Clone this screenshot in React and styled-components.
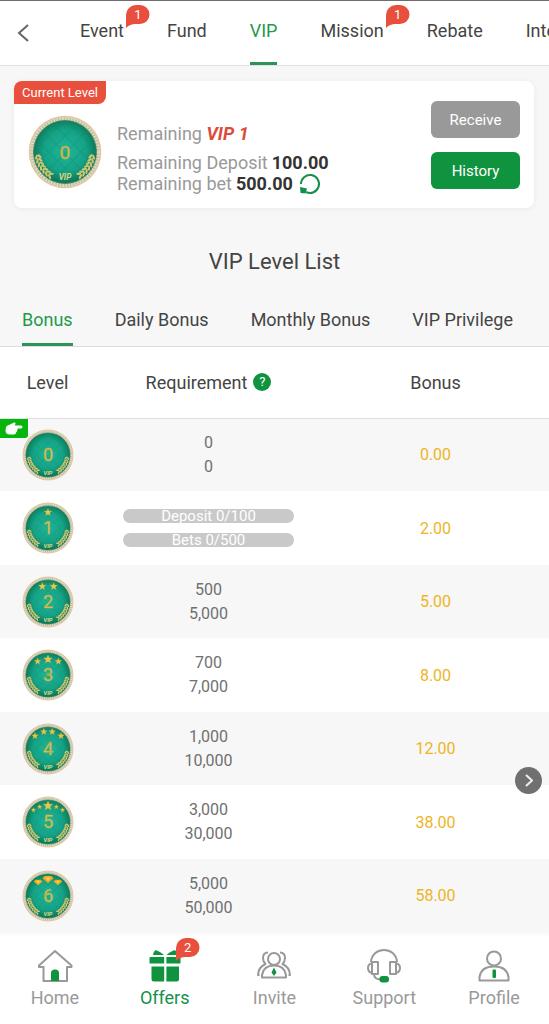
import React from 'react'
import styled, { createGlobalStyle } from 'styled-components'

const topTabs = [
    { name: 'Event', count: 1 },
    { name: 'Fund' },
    { name: 'VIP', active: true },
    { name: 'Mission', count: 1 },
    { name: 'Rebate' },
    { name: 'Interest' },
]

const levelTabs = ['Bonus', 'Daily Bonus', 'Monthly Bonus', 'VIP Privilege']

const levels = [
    { level: 0, deposit: '0', bets: '0', bonus: '0.00', current: true },
    { level: 1, deposit: '0/100', bets: '0/500', bonus: '2.00', progress: true },
    { level: 2, deposit: '500', bets: '5,000', bonus: '5.00' },
    { level: 3, deposit: '700', bets: '7,000', bonus: '8.00' },
    { level: 4, deposit: '1,000', bets: '10,000', bonus: '12.00' },
    { level: 5, deposit: '3,000', bets: '30,000', bonus: '38.00' },
    { level: 6, deposit: '5,000', bets: '50,000', bonus: '58.00' },
]

// [x, y, radius] of the stars above the number
const stars = {
    1: [[50, 20, 8]],
    2: [[39, 20, 8], [61, 20, 8]],
    3: [[30, 24, 7], [50, 20, 9], [70, 24, 7]],
    4: [[25, 25, 7], [42, 17, 7], [58, 17, 7], [75, 25, 7]],
    5: [[22, 27, 5], [34, 21, 5], [50, 19, 10], [66, 21, 5], [78, 27, 5]],
}

const gems = [[31, 23, 7], [50, 17, 9], [69, 23, 7]]

const leaves = [0, 1, 2, 3, 4, 5, 6]

const starPoints = (x, y, r) =>
    Array.from({ length: 10 }, (_, i) => {
        const radius = i % 2 ? r * 0.45 : r
        const angle = (Math.PI / 5) * i - Math.PI / 2
        return `${(x + radius * Math.cos(angle)).toFixed(1)},${(y + radius * Math.sin(angle)).toFixed(1)}`
    }).join(' ')

const Laurel = () => (
    <g>
        {leaves.map(i => (
            <g key={i} transform={`rotate(${168 - i * 8} 50 50) translate(87 50) rotate(90)`} fill="#d3c672">
                <ellipse cx="0" cy="-2.6" rx="3.6" ry="1.5" transform="rotate(32)" />
                <ellipse cx="0" cy="2.6" rx="3.6" ry="1.5" transform="rotate(-32)" />
            </g>
        ))}
    </g>
)

const Medal = ({ level, size }) => (
    <MedalImage viewBox="0 0 100 100" $size={size} role="img" aria-label={`VIP level ${level}`}>
        <defs>
            <radialGradient id={`enamel${size}${level}`} cx="50%" cy="48%" r="52%">
                <stop offset="0" stopColor="#1fb59a" />
                <stop offset="0.65" stopColor="#15a286" />
                <stop offset="1" stopColor="#0b7552" />
            </radialGradient>
        </defs>
        <circle cx="50" cy="50" r="49" fill="#dcc7a2" />
        <circle cx="50" cy="50" r="46" fill="#b5bca3" />
        <circle cx="50" cy="50" r="45" fill="none" stroke="#e2dcc6" strokeWidth="4" strokeDasharray="2 2" />
        <circle cx="50" cy="50" r="42.5" fill={`url(#enamel${size}${level})`} stroke="#3f8059" strokeWidth="1" />
        <g stroke="#0f8e70" strokeWidth="1.4" opacity="0.35" fill="none">
            <path d="M14 36 L64 86 M20 22 L78 80 M36 14 L86 64 M54 10 L90 46" />
            <path d="M86 36 L36 86 M80 22 L22 80 M64 14 L14 64 M46 10 L10 46" />
        </g>
        <Laurel />
        <g transform="matrix(-1 0 0 1 100 0)"><Laurel /></g>
        <MedalName x="50" y="88">VIP</MedalName>
        {(stars[level] || []).map(([x, y, r]) => (
            <polygon key={x} points={starPoints(x, y, r)} fill="#e2c750" stroke="#9b9a3e" strokeWidth="0.6" />
        ))}
        {level === 6 && gems.map(([x, y, r]) => (
            <g key={x}>
                <path d={`M${x - r * 0.7} ${y - r * 0.6} h${r * 1.4} l${r * 0.5} ${r * 0.5} l${-r * 1.2} ${r} l${-r * 1.2} ${-r} z`} fill="#f3a81f" />
                <path d={`M${x - r * 0.5} ${y - r * 0.3} h${r} l${-r * 0.5} ${r * 0.7} z`} fill="#ffd75e" />
            </g>
        ))}
        <MedalNumber x="50" y={size > 60 ? 59 : 61} $size={size}>{level}</MedalNumber>
    </MedalImage>
)

const CountBubble = ({ count, place }) => (
    <Bubble $place={place}>
        <BubbleShape viewBox="0 0 24 24">
            <path d="M10 0 H14 A9.5 9.5 0 0 1 14 19 H9 C6 19 3 20 0 23 V10 A10 10 0 0 1 10 0 Z" fill="#e94f3d" />
        </BubbleShape>
        <BubbleCount>{count}</BubbleCount>
    </Bubble>
)

const HomeIcon = () => (
    <NavIcon viewBox="0 0 36 36">
        <path d="M18 3 L2 17.500 V19 H6.500 V33 H30 V19 H34.500 V17.500 Z" />
        <path className="fill" d="M14 33 V25 Q14 21.500 18 21.500 Q22 21.500 22 25 V33 Z" />
    </NavIcon>
)

const OffersIcon = () => (
    <NavIcon viewBox="0 0 36 36">
        <g className="fill">
            <path d="M3.500 9 H17.200 V15.500 H2.500 V10 Q2.500 9 3.500 9 Z" />
            <path d="M19.400 9 H32.500 Q33.500 9 33.500 10 V15.500 H19.400 Z" />
            <path d="M4.500 18.500 H17.200 V33.500 H7 Q4.500 33.500 4.500 31 Z" />
            <path d="M19.400 18.500 H32 V31 Q32 33.500 29.500 33.500 H19.400 Z" />
            <path d="M6 7 Q7 1.500 10 2.500 Q14 4 17 7 Z" />
            <path d="M19.500 7 Q22 4 26.500 2.500 Q29.500 1.500 30.500 7 Z" />
        </g>
    </NavIcon>
)

const InviteIcon = () => (
    <NavIcon viewBox="0 0 36 36">
        <circle cx="18" cy="11" r="6" />
        <path d="M6 29.500 V27 Q7.500 17.500 18 17.500 Q28.500 17.500 30 27 V29.500 Z" />
        <path d="M12 4.500 Q7 4.500 7 10 Q7 13.500 9.500 16 Q2.500 19 2 27 H3.500" />
        <path d="M24 4.500 Q29 4.500 29 10 Q29 13.500 26.500 16 Q33.500 19 34 27 H32.500" />
        <path className="fill" d="M18 19.500 L20.500 24.500 L18 28 L15.500 24.500 Z" />
    </NavIcon>
)

const SupportIcon = () => (
    <NavIcon viewBox="0 0 36 36">
        <path d="M5 14 C6 -2 30 -2 31 14" />
        <rect x="6" y="14" width="6" height="12" />
        <rect x="24" y="14" width="6" height="12" />
        <path d="M6 15.500 Q2 16 2 20 Q2 24 6 25 M30 15.500 Q34 16 34 20 Q34 24 30 25" />
        <path d="M8 26 Q8 31 14 31.500" />
        <rect className="fill" x="13.500" y="28" width="9.500" height="6.500" rx="3" />
    </NavIcon>
)

const ProfileIcon = () => (
    <NavIcon viewBox="0 0 36 36">
        <circle cx="18" cy="10.500" r="7" />
        <path d="M3.500 32.500 V29 Q5 18.500 18 18.500 Q31 18.500 32.500 29 V32.500 Z" />
        <rect className="fill" x="16.500" y="21.500" width="3.500" height="8.500" rx="1" />
    </NavIcon>
)

const navItems = [
    { name: 'Home', Icon: HomeIcon },
    { name: 'Offers', Icon: OffersIcon, active: true, count: 2 },
    { name: 'Invite', Icon: InviteIcon },
    { name: 'Support', Icon: SupportIcon },
    { name: 'Profile', Icon: ProfileIcon },
]

const App = () => {
    return (
        <Page>
            <GlobalStyle />
            <Header>
                <BackButton aria-label="Back">
                    <svg width="12" height="18" viewBox="0 0 12 18" fill="none" stroke="currentColor" strokeWidth="2">
                        <path d="M11 1 L2 9 L11 17" />
                    </svg>
                </BackButton>
                <TopTabs>
                    {topTabs.map(tab => (
                        <TabLink key={tab.name} href="#" $active={tab.active}>
                            {tab.name}
                            {tab.count && <CountBubble count={tab.count} place="tab" />}
                        </TabLink>
                    ))}
                </TopTabs>
            </Header>

            <LevelCard>
                <CurrentTag>Current Level</CurrentTag>
                <CardBody>
                    <Medal level={0} size={74} />
                    <Remaining>
                        <NextLevel>Remaining <em>VIP 1</em></NextLevel>
                        <Amount>Remaining Deposit <b>100.00</b></Amount>
                        <Amount>
                            Remaining bet <b>500.00</b>
                            <RefreshButton aria-label="Refresh">
                                <svg width="22" height="22" viewBox="0 0 22 22">
                                    <path d="M2 11 A9 9 0 1 1 7 19" fill="none" stroke="currentColor" strokeWidth="2" />
                                    <path d="M1 14 L8 15.500 L6.500 20.500 L1.500 20 Z" fill="currentColor" />
                                </svg>
                            </RefreshButton>
                        </Amount>
                    </Remaining>
                    <CardActions>
                        <ActionButton $color="#999999">Receive</ActionButton>
                        <ActionButton $color="#0f933e">History</ActionButton>
                    </CardActions>
                </CardBody>
            </LevelCard>

            <Title>VIP Level List</Title>
            <LevelTabs>
                {levelTabs.map((name, i) => (
                    <TabLink key={name} href="#" $active={i === 0}>{name}</TabLink>
                ))}
            </LevelTabs>

            <LevelTable>
                <thead>
                    <tr>
                        <HeadCell $width="95px">Level</HeadCell>
                        <HeadCell>
                            <HeadLabel>Requirement <HelpButton aria-label="Help">?</HelpButton></HeadLabel>
                        </HeadCell>
                        <HeadCell>Bonus</HeadCell>
                    </tr>
                </thead>
                <tbody>
                    {levels.map(row => (
                        <LevelRow key={row.level}>
                            <MedalCell>
                                {row.current && (
                                    <CurrentMark>
                                        <svg width="18" height="13" viewBox="0 0 18 13" fill="currentColor">
                                            <path d="M1 5 Q2 3 5 2.500 L9 0.500 Q11 0 10.500 2 L9.500 3.500 H16 Q17.500 3.700 17.500 5 Q17.500 6.300 16 6.500 H12.500 Q13 8 12 8.500 Q12.300 10 11 10.500 Q11 12.500 9 12.500 H5 Q1 12.500 0.500 9 Z" />
                                        </svg>
                                    </CurrentMark>
                                )}
                                <Medal level={row.level} size={52} />
                            </MedalCell>
                            <td>
                                {row.progress ? (
                                    <Bars>
                                        <Bar>Deposit {row.deposit}</Bar>
                                        <Bar>Bets {row.bets}</Bar>
                                    </Bars>
                                ) : (
                                    <>
                                        <Need>{row.deposit}</Need>
                                        <Need>{row.bets}</Need>
                                    </>
                                )}
                            </td>
                            <BonusCell>{row.bonus}</BonusCell>
                        </LevelRow>
                    ))}
                </tbody>
            </LevelTable>

            <FloatingButton aria-label="Open side menu">
                <svg width="8" height="13" viewBox="0 0 8 13" fill="none" stroke="currentColor" strokeWidth="2">
                    <path d="M1 1 L7 6.500 L1 12" />
                </svg>
            </FloatingButton>

            <BottomNav>
                {navItems.map(({ name, Icon, active, count }) => (
                    <NavLink key={name} href="#" $active={active}>
                        <Icon />
                        {name}
                        {count && <CountBubble count={count} place="nav" />}
                    </NavLink>
                ))}
            </BottomNav>
        </Page>
    )
}

export default App

const GlobalStyle = createGlobalStyle`
    *{
        box-sizing: border-box;
    }
    body{
        margin: 0;
        background: #f7f7f7;
        color: #444444;
        font-family: Roboto, "Liberation Sans", sans-serif;
        font-size: 18px;
    }
    button{
        padding: 0;
        border: 0;
        font-family: inherit;
        cursor: pointer;
    }
    a{
        color: inherit;
        text-decoration: none;
    }
`

const Page = styled.div`
    display: flex;
    flex-direction: column;
    min-height: 100vh;
`

const Header = styled.header`
    display: flex;
    align-items: stretch;
    height: 66px;
    overflow: hidden;
    background: #ffffff;
    border-top: 1px solid #706c70;
    border-bottom: 1px solid #e0e0e0;
`

const BackButton = styled.button`
    display: flex;
    flex: none;
    align-items: center;
    width: 80px;
    padding-left: 17px;
    background: none;
    color: #666666;
`

const TopTabs = styled.nav`
    display: flex;
    gap: 43px;
`

const TabLink = styled.a`
    position: relative;
    display: flex;
    align-items: center;
    padding-bottom: 2px;
    white-space: nowrap;
    border-bottom: 3px solid ${({ $active }) => ($active ? '#2c9458' : 'transparent')};
    color: ${({ $active }) => ($active ? '#1f9a4b' : 'inherit')};
`

const Bubble = styled.span`
    position: absolute;
    width: 24px;
    height: 24px;
    ${({ $place }) => ($place === 'tab' ? 'top: 4px; left: calc(100% + 2px);' : 'top: 2px; left: calc(50% + 11px);')}
`

const BubbleShape = styled.svg`
    display: block;
    width: 100%;
    height: 100%;
`

const BubbleCount = styled.span`
    position: absolute;
    top: 0;
    left: 0;
    width: 100%;
    color: #ffffff;
    font-size: 13px;
    line-height: 19px;
    text-align: center;
`

const LevelCard = styled.section`
    margin: 15px 15px 0 14px;
    padding-bottom: 14px;
    background: #ffffff;
    border-radius: 8px;
    box-shadow: 0 1px 6px rgba(0, 0, 0, 0.06);
`

const CurrentTag = styled.div`
    width: fit-content;
    padding: 0 8px;
    background: #e94f3d;
    border-radius: 8px 0;
    color: #ffffff;
    font-size: 13px;
    line-height: 23px;
`

const CardBody = styled.div`
    display: flex;
    align-items: flex-start;
    padding: 0 14px;
`

const MedalImage = styled.svg`
    display: block;
    flex: none;
    width: ${({ $size }) => $size}px;
    height: ${({ $size }) => $size}px;
    ${({ $size }) => ($size > 60 ? 'margin-top: 11px;' : 'margin: 0 auto;')}
`

const MedalNumber = styled.text`
    fill: #dcc95a;
    stroke: #a8a945;
    stroke-width: 1px;
    font-size: ${({ $size }) => ($size > 60 ? 26 : 35)}px;
    text-anchor: middle;
`

const MedalName = styled.text`
    fill: #dcd68a;
    font-size: 11px;
    font-style: italic;
    font-weight: 700;
    text-anchor: middle;
`

const Remaining = styled.div`
    flex: 1;
    margin: 19px 0 0 15px;
    color: #999999;
`

const NextLevel = styled.div`
    margin-bottom: 7px;
    line-height: 22px;
    em{
        color: #dc4a3c;
        font-weight: 700;
    }
`

const Amount = styled.div`
    display: flex;
    align-items: center;
    height: 21px;
    white-space: nowrap;
    b{
        margin-left: 4px;
        color: #333333;
    }
`

const RefreshButton = styled.button`
    display: flex;
    margin-left: 6px;
    background: none;
    color: #15904a;
`

const CardActions = styled.div`
    display: flex;
    flex-direction: column;
    gap: 14px;
    margin-top: -3px;
`

const ActionButton = styled.button`
    width: 89px;
    height: 37px;
    background: ${({ $color }) => $color};
    border-radius: 6px;
    color: #ffffff;
    font-size: 15px;
`

const Title = styled.h2`
    margin: 41px 0 0;
    font-size: 22px;
    font-weight: 400;
    line-height: 26px;
    text-align: center;
`

const LevelTabs = styled.nav`
    display: flex;
    gap: 42px;
    height: 54px;
    margin-top: 18px;
    padding: 4px 22px 0;
    border-bottom: 1px solid #dddddd;
`

const LevelTable = styled.table`
    width: 100%;
    table-layout: fixed;
    border-collapse: collapse;
    background: #ffffff;
    text-align: center;
    td{
        padding: 0;
    }
`

const HeadCell = styled.th`
    width: ${({ $width }) => $width || 'auto'};
    height: 71px;
    padding: 0;
    border-bottom: 1px solid #e0e0e0;
    font-weight: 400;
`

const HeadLabel = styled.div`
    display: flex;
    align-items: center;
    justify-content: center;
    gap: 6px;
`

const HelpButton = styled.button`
    width: 18px;
    height: 18px;
    background: #0f933e;
    border-radius: 50%;
    color: #ffffff;
    font-size: 13px;
    line-height: 18px;
`

const LevelRow = styled.tr`
    height: 73px;
    background: #f7f7f7;
    &:nth-child(even){
        height: 74px;
        background: #ffffff;
    }
`

const MedalCell = styled.td`
    position: relative;
`

const CurrentMark = styled.span`
    position: absolute;
    top: 0;
    left: 0;
    display: flex;
    align-items: center;
    justify-content: center;
    width: 28px;
    height: 19px;
    background: #08b50c;
    border-bottom-right-radius: 3px;
    color: #ffffff;
`

const Need = styled.div`
    color: #707070;
    font-size: 16px;
    line-height: 24px;
`

const Bars = styled.div`
    display: grid;
    gap: 10px;
    width: 75%;
    margin: 0 auto;
`

const Bar = styled.div`
    height: 14px;
    background: #c9c9c9;
    border-radius: 7px;
    color: #ffffff;
    font-size: 15px;
    line-height: 15px;
`

const BonusCell = styled.td`
    color: #edb525;
    font-size: 16px;
`

const FloatingButton = styled.button`
    position: fixed;
    right: 7px;
    bottom: 230px;
    display: flex;
    align-items: center;
    justify-content: center;
    width: 27px;
    height: 27px;
    background: #707070;
    border-radius: 50%;
    color: #eeeeee;
`

const BottomNav = styled.nav`
    position: sticky;
    bottom: 0;
    display: grid;
    grid-template-columns: repeat(5, 1fr);
    height: 88px;
    margin-top: auto;
    background: #ffffff;
    box-shadow: 0 -2px 4px #ffffff;
`

const NavLink = styled.a`
    position: relative;
    display: flex;
    flex-direction: column;
    align-items: center;
    padding-top: 12px;
    color: ${({ $active }) => ($active ? '#15904a' : '#999999')};
    line-height: 28px;
`

const NavIcon = styled.svg`
    width: 36px;
    height: 36px;
    fill: none;
    stroke: #999999;
    stroke-width: 2;
    stroke-linejoin: round;
    .fill{
        fill: #0f933e;
        stroke: none;
    }
`
